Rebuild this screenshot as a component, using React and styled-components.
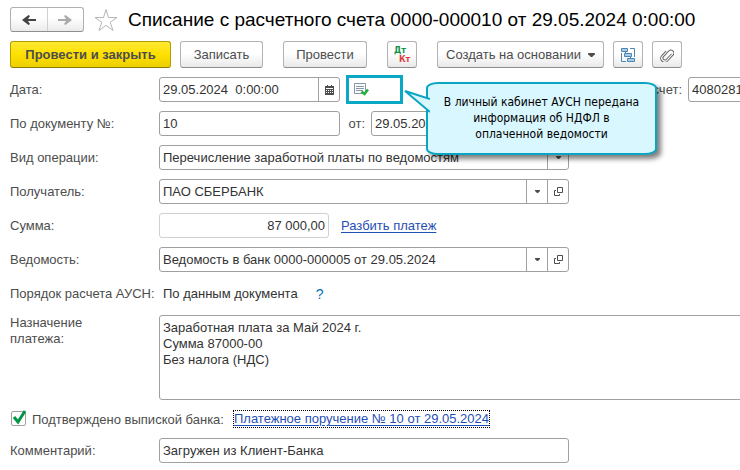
import styled, { createGlobalStyle } from 'styled-components';

const GlobalStyle = createGlobalStyle`
  * {
    box-sizing: border-box;
  }
  body {
    margin: 0;
    background: #fff;
  }
  body, button, input, select, textarea {
    font-family: 'Liberation Sans', Arial, sans-serif;
    font-size: 13px;
  }
`;

const Page = styled.main`
  display: flex;
  flex-direction: column;
  gap: 9px;
  padding: 7px 0 7px 10px;
  overflow: hidden;
  color: #4d4d4d;
`;

const Header = styled.header`
  display: flex;
  align-items: center;
  height: 25px;
`;
const NavGroup = styled.div`
  display: flex;
  width: 74px;
  height: 25px;
  border: 1px solid #b0b0b0;
  border-bottom-color: #8f8f8f;
  border-radius: 3px;
  background: linear-gradient(#fff 40%, #ebebeb);
`;
const NavButton = styled.button`
  display: flex;
  flex: 1;
  align-items: center;
  justify-content: center;
  padding: 0;
  border: none;
  background: none;
  color: ${(props) => props.$color};
  & + & {
    border-left: 1px solid #d0d0d0;
  }
`;
const StarButton = styled.button`
  display: flex;
  margin: 0 10px;
  padding: 0;
  border: none;
  background: none;
`;
const Title = styled.h1`
  margin: 0;
  color: #000;
  font-size: 19px;
  font-weight: 400;
  line-height: 24px;
  white-space: nowrap;
`;

const Toolbar = styled.div`
  display: flex;
  gap: 20px;
`;
const ToolGroup = styled.div`
  display: flex;
  gap: 9px;
`;
const ToolButton = styled.button`
  display: flex;
  align-items: center;
  justify-content: center;
  gap: 7px;
  width: ${(props) => props.$width}px;
  height: 27px;
  padding: 0;
  border: 1px solid #b3b3b3;
  border-bottom-color: #8c8c8c;
  border-radius: 3px;
  background: linear-gradient(#fff 45%, #e9e9e9);
  color: #4d4d4d;
  white-space: nowrap;
`;
const PrimaryButton = styled(ToolButton)`
  border-color: #b39b00;
  border-bottom-color: #8f7c00;
  background: linear-gradient(#ffe934, #ffe000 50%, #ecd000);
  font-weight: 700;
`;

const Form = styled.form`
  display: grid;
  grid-template-columns: 149px 1fr;
  row-gap: 9px;
  min-width: 860px;
`;
const Label = styled.label`
  line-height: 25px;
  white-space: nowrap;
`;
const WrappedLabel = styled.label`
  width: 90px;
  line-height: 16px;
`;
const Cell = styled.div`
  display: flex;
  align-items: center;
  height: 25px;
`;
const FieldBox = styled.div`
  display: flex;
  flex: none;
  width: ${(props) => props.$width}px;
  height: 25px;
  border: 1px solid ${(props) => (props.$muted ? '#d0d0d0' : '#a0a0a0')};
  border-radius: 3px;
  background: #fff;
`;
const TextInput = styled.input`
  flex: 1;
  min-width: 0;
  padding: 0 3px;
  border: none;
  outline: none;
  background: none;
  color: #333;
  text-align: ${(props) => props.$align || 'left'};
`;
const FieldButton = styled.button`
  display: flex;
  flex: none;
  align-items: center;
  justify-content: center;
  width: 21px;
  padding: 0;
  border: none;
  border-left: 1px solid #a0a0a0;
  background: none;
`;
const SelectBox = styled(FieldBox)`
  display: grid;
`;
const Select = styled.select`
  grid-area: 1 / 1;
  padding: 0 3px;
  border: none;
  appearance: none;
  background: none;
  color: #333;
`;
const SelectArrow = styled.span`
  display: flex;
  grid-area: 1 / 1;
  align-items: center;
  justify-content: center;
  justify-self: end;
  width: 21px;
  border-left: 1px solid #a0a0a0;
  pointer-events: none;
`;
const InlineLabel = styled.label`
  width: ${(props) => props.$width}px;
  padding-right: 6px;
  text-align: right;
  white-space: nowrap;
`;
const DateGroup = styled.div`
  display: flex;
  align-items: center;
  gap: 6px;
  width: 410px;
`;

const StatusMark = styled.div`
  position: relative;
  display: flex;
  align-items: center;
  width: 57px;
  height: 29px;
  padding-left: 4px;
  border: 3px solid #09a8c5;
`;
const Callout = styled.div`
  position: absolute;
  top: 4px;
  left: 77px;
  z-index: 1;
  width: 231px;
  padding: 10px 12px 11px;
  border: 2px solid #09a5c3;
  border-radius: 12px / 6px;
  background: #d9f7fe;
  box-shadow: 4px 4px 5px rgba(0, 0, 0, 0.5);
  color: #000;
  font-family: 'DejaVu Sans Condensed', 'Noto Sans', sans-serif;
  font-size: 12px;
  line-height: 16px;
  text-align: center;
`;
const CalloutTail = styled.svg`
  position: absolute;
  top: 4px;
  left: -26px;
`;

const Link = styled.a`
  color: #1f4fb5;
  text-underline-offset: 2px;
  white-space: nowrap;
`;
const SplitLink = styled(Link)`
  margin-left: 12px;
`;
const FocusedLink = styled(Link)`
  margin-left: 10px;
  outline: 1px dotted #000;
  line-height: 16px;
`;
const PlainValue = styled.output`
  padding-left: 4px;
  color: #333;
`;
const HelpButton = styled.button`
  margin-left: 18px;
  padding: 0;
  border: none;
  background: none;
  color: #0a72b5;
  font-size: 14px;
`;
const Purpose = styled.textarea`
  height: 85px;
  padding: 4px 3px;
  border: 1px solid #a0a0a0;
  border-radius: 3px;
  outline: none;
  color: #333;
  line-height: 16px;
  resize: none;
`;
const ConfirmRow = styled.div`
  display: flex;
  grid-column: 1 / -1;
  align-items: center;
  height: 20px;
`;
const CheckHolder = styled.span`
  display: grid;
  width: 17px;
  height: 16px;
  margin-right: 5px;
`;
const CheckBox = styled.input`
  grid-area: 1 / 1;
  width: 15px;
  height: 15px;
  margin: 0 0 0 1px;
  border: 1px solid #a0a0a0;
  border-radius: 2px;
  appearance: none;
`;
const CheckMark = styled.svg`
  grid-area: 1 / 1;
  overflow: visible;
  pointer-events: none;
  visibility: hidden;
  ${CheckBox}:checked + & {
    visibility: visible;
  }
`;

const ArrowIcon = ({ flip }) => (
  <svg width="14" height="10" viewBox="0 0 14 10" fill="currentColor">
    <path
      d={
        flip
          ? 'M0 4h8L6 1l1.500-1L14 5l-6.500 5L6 9l2-3H0z'
          : 'M14 4H6l2-3-1.500-1L0 5l6.500 5L8 9 6 6h8z'
      }
    />
  </svg>
);
const StarIcon = () => (
  <svg width="24" height="24" viewBox="0 0 24 24">
    <path
      d="M12 1.500l2.500 8h8.500l-6.800 4.800 2.800 8.200-7-5.200-7 5.200 2.800-8.200L1 9.500h8.500z"
      fill="#fff"
      stroke="#b5b5b5"
    />
  </svg>
);
const DropIcon = ({ large }) => (
  <svg width={large ? 7 : 5} height={large ? 4 : 3} viewBox="0 0 5 3">
    <path d="M0 0h5v1L3 3H2L0 1z" fill="#4d4d4d" />
  </svg>
);
const OpenIcon = () => (
  <svg width="9" height="9" viewBox="0 0 9 9">
    <path
      d="M3.500.5h5v5h-5zM2 3.500H.5v5h5V7"
      fill="none"
      stroke="#4d4d4d"
    />
  </svg>
);
const CalendarIcon = () => (
  <svg width="9" height="10" viewBox="0 0 9 10">
    <path d="M0 1h9v9H0zM2 0h1v2H2zM6 0h1v2H6z" fill="#4d4d4d" />
    <path
      d="M1 3.500h7M1 5.500h1M3 5.500h1M5 5.500h1M7 5.500h1M1 7.500h1M3 7.500h1M5 7.500h1M7 7.500h1"
      stroke="#fff"
    />
  </svg>
);
const DtKtIcon = () => (
  <svg
    width="18"
    height="20"
    viewBox="0 0 18 20"
    fontFamily="DejaVu Sans Condensed, sans-serif"
    fontWeight="700"
    fontSize="9"
  >
    <text x="1" y="8" fill="#12934a">Дт</text>
    <text x="6" y="17" fill="#dc4040">Кт</text>
  </svg>
);
const StructureIcon = () => (
  <svg width="16" height="16" viewBox="0 0 16 16" fill="none" stroke="#4d87b3">
    <path d="M1.500 1.500h6v3h-6zM4.500 6.500h7v3h-7zM7.500 11.500h7v3h-7z" fill="#a9cbe5" />
    <path d="M10 1.500h4.500V10M1.500 6v8.500H6M5.500 4.500v2M10.500 9.500v2" />
  </svg>
);
const ClipIcon = () => (
  <svg width="14" height="14" viewBox="0 0 14 14">
    <g transform="rotate(43 7 7)" fill="none" stroke="#666">
      <path d="M9.500 3v7.500a2 2 0 0 1-4 0V3a3 3 0 0 1 6 0v8a4 4 0 0 1-8 0V4.500" />
    </g>
  </svg>
);
const StatusIcon = () => (
  <svg width="17" height="13" viewBox="0 0 17 13">
    <path d="M1.500.5h11v10h-11z" fill="#fff" stroke="#8598a8" />
    <path d="M3 3.500h8M3 5.500h8M3 7.500h7" stroke="#8598a8" />
    <path d="M8.500 8.500l3 2.500L15 6.500" fill="none" stroke="#24ae3c" strokeWidth="2.500" />
  </svg>
);

function PickerButtons() {
  return (
    <>
      <FieldButton type="button" aria-label="Выбрать">
        <DropIcon />
      </FieldButton>
      <FieldButton type="button" aria-label="Открыть">
        <OpenIcon />
      </FieldButton>
    </>
  );
}

function App() {
  return (
    <Page>
      <GlobalStyle />
      <Header>
        <NavGroup>
          <NavButton $color="#444" aria-label="Назад">
            <ArrowIcon />
          </NavButton>
          <NavButton $color="#aaa" aria-label="Вперед">
            <ArrowIcon flip />
          </NavButton>
        </NavGroup>
        <StarButton aria-label="В избранное">
          <StarIcon />
        </StarButton>
        <Title>Списание с расчетного счета 0000-000010 от 29.05.2024 0:00:00</Title>
      </Header>

      <Toolbar>
        <ToolGroup>
          <PrimaryButton $width={161}>Провести и закрыть</PrimaryButton>
          <ToolButton $width={83}>Записать</ToolButton>
        </ToolGroup>
        <ToolButton $width={84}>Провести</ToolButton>
        <ToolButton $width={30} aria-label="Проводки">
          <DtKtIcon />
        </ToolButton>
        <ToolGroup>
          <ToolButton $width={167}>
            Создать на основании
            <DropIcon large />
          </ToolButton>
          <ToolButton $width={30} aria-label="Структура подчиненности">
            <StructureIcon />
          </ToolButton>
          <ToolButton $width={30} aria-label="Файлы">
            <ClipIcon />
          </ToolButton>
        </ToolGroup>
      </Toolbar>

      <Form>
        <Label htmlFor="date">Дата:</Label>
        <Cell>
          <DateGroup>
            <FieldBox $width={181}>
              <TextInput id="date" defaultValue="29.05.2024  0:00:00" />
              <FieldButton type="button" aria-label="Календарь">
                <CalendarIcon />
              </FieldButton>
            </FieldBox>
            <StatusMark>
              <StatusIcon />
              <Callout>
                <CalloutTail width="28" height="26" viewBox="0 0 28 26">
                  <path d="M28 11L3 3l25 21" fill="#d9f7fe" stroke="#09a5c3" strokeWidth="2" />
                </CalloutTail>
                В личный кабинет АУСН передана информация об НДФЛ в оплаченной ведомости
              </Callout>
            </StatusMark>
          </DateGroup>
          <InlineLabel htmlFor="account" $width={119}>
            счет:
          </InlineLabel>
          <FieldBox $width={170}>
            <TextInput id="account" defaultValue="40802810" />
          </FieldBox>
        </Cell>

        <Label htmlFor="number">По документу №:</Label>
        <Cell>
          <FieldBox $width={181}>
            <TextInput id="number" defaultValue="10" />
          </FieldBox>
          <InlineLabel htmlFor="docDate" $width={31}>
            от:
          </InlineLabel>
          <FieldBox $width={130}>
            <TextInput id="docDate" defaultValue="29.05.2024" />
          </FieldBox>
        </Cell>

        <Label htmlFor="operation">Вид операции:</Label>
        <SelectBox $width={410}>
          <Select id="operation">
            <option>Перечисление заработной платы по ведомостям</option>
          </Select>
          <SelectArrow>
            <DropIcon />
          </SelectArrow>
        </SelectBox>

        <Label htmlFor="payee">Получатель:</Label>
        <FieldBox $width={410}>
          <TextInput id="payee" defaultValue="ПАО СБЕРБАНК" />
          <PickerButtons />
        </FieldBox>

        <Label htmlFor="sum">Сумма:</Label>
        <Cell>
          <FieldBox $width={170} $muted>
            <TextInput id="sum" $align="right" defaultValue="87 000,00" readOnly />
          </FieldBox>
          <SplitLink href="#split">Разбить платеж</SplitLink>
        </Cell>

        <Label htmlFor="sheet">Ведомость:</Label>
        <FieldBox $width={410}>
          <TextInput id="sheet" defaultValue="Ведомость в банк 0000-000005 от 29.05.2024" />
          <PickerButtons />
        </FieldBox>

        <Label htmlFor="order">Порядок расчета АУСН:</Label>
        <Cell>
          <PlainValue id="order">По данным документа</PlainValue>
          <HelpButton type="button">?</HelpButton>
        </Cell>

        <WrappedLabel htmlFor="purpose">Назначение платежа:</WrappedLabel>
        <Purpose
          id="purpose"
          defaultValue={'Заработная плата за Май 2024 г.\nСумма 87000-00\nБез налога (НДС)'}
        />

        <ConfirmRow>
          <CheckHolder>
            <CheckBox id="confirmed" type="checkbox" defaultChecked />
            <CheckMark width="17" height="16" viewBox="0 0 17 16">
              <path d="M4 6l4 5 7-11" fill="none" stroke="#009646" strokeWidth="3" />
            </CheckMark>
          </CheckHolder>
          <label htmlFor="confirmed">Подтверждено выпиской банка:</label>
          <FocusedLink href="#order">Платежное поручение № 10 от 29.05.2024</FocusedLink>
        </ConfirmRow>

        <Label htmlFor="comment">Комментарий:</Label>
        <FieldBox $width={410}>
          <TextInput id="comment" defaultValue="Загружен из Клиент-Банка" />
        </FieldBox>
      </Form>
    </Page>
  );
}

export default App;
